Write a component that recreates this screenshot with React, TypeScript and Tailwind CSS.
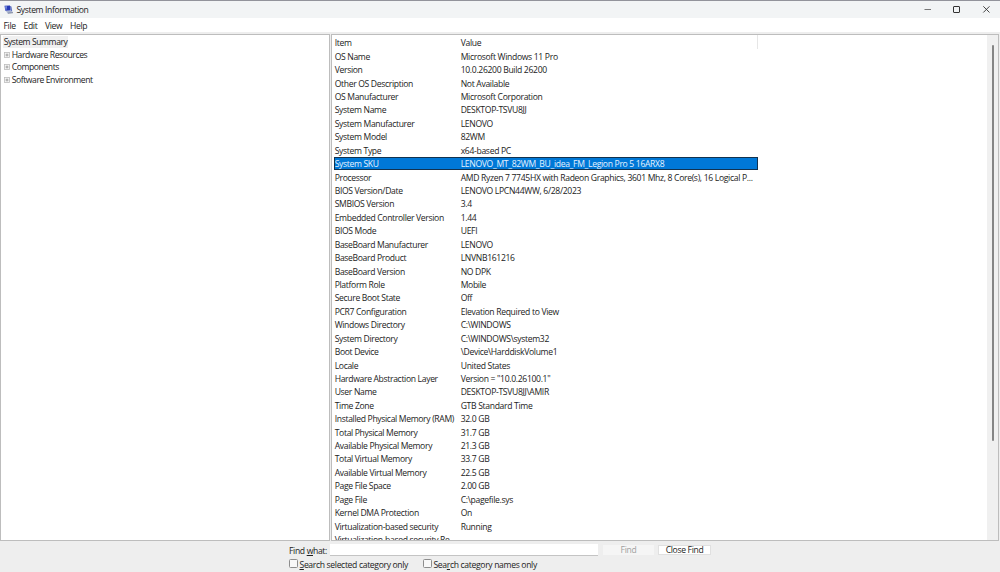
import React from "react";

const rows: [string, string][] = [
  ["OS Name", "Microsoft Windows 11 Pro"],
  ["Version", "10.0.26200 Build 26200"],
  ["Other OS Description", "Not Available"],
  ["OS Manufacturer", "Microsoft Corporation"],
  ["System Name", "DESKTOP-TSVU8JJ"],
  ["System Manufacturer", "LENOVO"],
  ["System Model", "82WM"],
  ["System Type", "x64-based PC"],
  ["System SKU", "LENOVO_MT_82WM_BU_idea_FM_Legion Pro 5 16ARX8"],
  ["Processor", "AMD Ryzen 7 7745HX with Radeon Graphics, 3601 Mhz, 8 Core(s), 16 Logical P..."],
  ["BIOS Version/Date", "LENOVO LPCN44WW, 6/28/2023"],
  ["SMBIOS Version", "3.4"],
  ["Embedded Controller Version", "1.44"],
  ["BIOS Mode", "UEFI"],
  ["BaseBoard Manufacturer", "LENOVO"],
  ["BaseBoard Product", "LNVNB161216"],
  ["BaseBoard Version", "NO DPK"],
  ["Platform Role", "Mobile"],
  ["Secure Boot State", "Off"],
  ["PCR7 Configuration", "Elevation Required to View"],
  ["Windows Directory", "C:\\WINDOWS"],
  ["System Directory", "C:\\WINDOWS\\system32"],
  ["Boot Device", "\\Device\\HarddiskVolume1"],
  ["Locale", "United States"],
  ["Hardware Abstraction Layer", 'Version = "10.0.26100.1"'],
  ["User Name", "DESKTOP-TSVU8JJ\\AMIR"],
  ["Time Zone", "GTB Standard Time"],
  ["Installed Physical Memory (RAM)", "32.0 GB"],
  ["Total Physical Memory", "31.7 GB"],
  ["Available Physical Memory", "21.3 GB"],
  ["Total Virtual Memory", "33.7 GB"],
  ["Available Virtual Memory", "22.5 GB"],
  ["Page File Space", "2.00 GB"],
  ["Page File", "C:\\pagefile.sys"],
  ["Kernel DMA Protection", "On"],
  ["Virtualization-based security", "Running"],
  ["Virtualization-based security Re...", ""],
];

const categories = ["Hardware Resources", "Components", "Software Environment"];

function AppIcon() {
  return (
    <svg className="h-[10px] w-[10px]" viewBox="0 0 10 10">
      <path d="M0.5 0.8 6 0.5 6.6 5.4 1.3 5.8Z" fill="#2438b4" />
      <path d="M1 1.3 3.2 1.2 2.3 5 1.6 5.1Z" fill="#7b8fe0" />
      <path d="M6 0.9 7.4 1.4 8.2 6.4 6.6 5.4Z" fill="#5569bd" />
      <path d="M1.8 6.2 7.2 5.7 9 7.6 3.8 8.2Z" fill="#a9b4cf" />
      <path d="M3.8 8.3 9 7.7" stroke="#57637f" strokeWidth="0.7" />
    </svg>
  );
}

function Expander() {
  return (
    <svg className="h-[6px] w-[6px] shrink-0" viewBox="0 0 6 6" fill="none">
      <rect x="0.5" y="0.5" width="5" height="5" fill="#f4f4f4" stroke="#bcbcbc" strokeWidth="0.8" />
      <path d="M1.5 3H4.5M3 1.5V4.5" stroke="#858585" strokeWidth="0.7" />
    </svg>
  );
}

function Check() {
  return <span className="h-[9px] w-[9px] shrink-0 rounded-[1.5px] border border-[#8d8d8d] bg-[#f8f8f8]" />;
}

export default function App() {
  return (
    <div className="flex h-[572px] w-[1000px] flex-col overflow-hidden whitespace-nowrap bg-[#eeeeee] font-['Open_Sans','Noto_Sans',sans-serif] text-[8.6px] leading-[12px] tracking-[-0.34px] text-[#222222]">
      <header className="flex h-[18px] shrink-0 items-center border-t border-[#92939b] bg-[#f2f4f5] pl-[3.5px]">
        <AppIcon />
        <span className="ml-[3px] tracking-[-0.38px]">System Information</span>
        <svg className="ml-auto h-[17px] w-[100px]" viewBox="0 0 100 17" fill="none" stroke="#333333">
          <path d="M24.5 8.5H31" stroke="#777777" />
          <rect x="53.5" y="5.5" width="6" height="6" rx="0.5" />
          <path d="M83.3 5.3 89.5 11.5M89.5 5.3 83.3 11.5" strokeWidth="0.9" />
        </svg>
      </header>
      <nav className="flex h-[14px] shrink-0 items-center bg-white pl-[3.5px] pt-px">
        <span className="w-[20px]">File</span>
        <span className="w-[21.5px]">Edit</span>
        <span className="w-[25px]">View</span>
        <span>Help</span>
      </nav>
      <div className="h-[2px] shrink-0 bg-[#eeeeee]" />

      <main className="flex h-[507px] shrink-0 gap-px pr-px">
        <aside className="w-[330px] border border-[#bdbdbd] bg-white pl-[2px] pt-[1px] tracking-[-0.42px]">
          <div className="flex h-[12.6px] items-center">
            <span className="bg-[#f0f0f0] px-[0.7px]">System Summary</span>
          </div>
          {categories.map((name) => (
            <div key={name} className="flex h-[12.6px] items-center gap-[1.7px] pl-px">
              <Expander />
              <span>{name}</span>
            </div>
          ))}
        </aside>
        <section className="flex min-w-0 flex-1 justify-between overflow-hidden border border-[#bdbdbd] bg-white">
          <div className="w-[426px] pl-[2px]">
            <div className="flex h-[14.4px] items-center border-r border-[#e6e6e6] pl-[0.7px] pt-[1.6px]">
              <span className="w-[126px]">Item</span>
              <span>Value</span>
            </div>
            {rows.map(([item, value], i) => (
              <div
                key={i}
                className={
                  item === "System SKU"
                    ? "flex h-[13.43px] items-center bg-[#0078d7] pt-[1.4px] text-[#e6f3ff] outline outline-1 -outline-offset-1 outline-[#12324f]"
                    : "flex h-[13.43px] items-center pt-[1.4px]"
                }
              >
                <span className="w-[126.7px] shrink-0 pl-[0.7px]">{item}</span>
                <span className="tracking-[-0.325px]">{value}</span>
              </div>
            ))}
          </div>
          <div className="flex w-[11px] shrink-0 justify-center bg-[#f0f0f0] pt-[10px]">
            <div className="h-[396px] w-[2px] rounded-full bg-[#858585]" />
          </div>
        </section>
      </main>

      <footer className="flex flex-1 flex-col pl-[289px] pt-[2px]">
        <div className="flex h-[13px] items-center">
          <span className="w-[41px] pt-[3px]">
            Find <span className="underline">w</span>hat:
          </span>
          <span className="h-[12px] w-[268px] border-b border-[#c4c4c4] bg-white" />
          <button className="ml-[5px] h-[10px] w-[51px] bg-[#f5f5f5] leading-[11px] text-[#a0a0a0]">Find</button>
          <button className="ml-[4px] h-[10px] w-[53px] border border-[#e0e0e0] bg-white leading-[9px]">Close Find</button>
        </div>
        <div className="flex h-[15px] items-center">
          <Check />
          <span className="ml-[1.5px] w-[123.5px] pt-[3px]">
            <span className="underline">S</span>earch selected category only
          </span>
          <Check />
          <span className="ml-[1.5px] pt-[3px]">
            Sea<span className="underline">r</span>ch category names only
          </span>
        </div>
      </footer>
    </div>
  );
}
